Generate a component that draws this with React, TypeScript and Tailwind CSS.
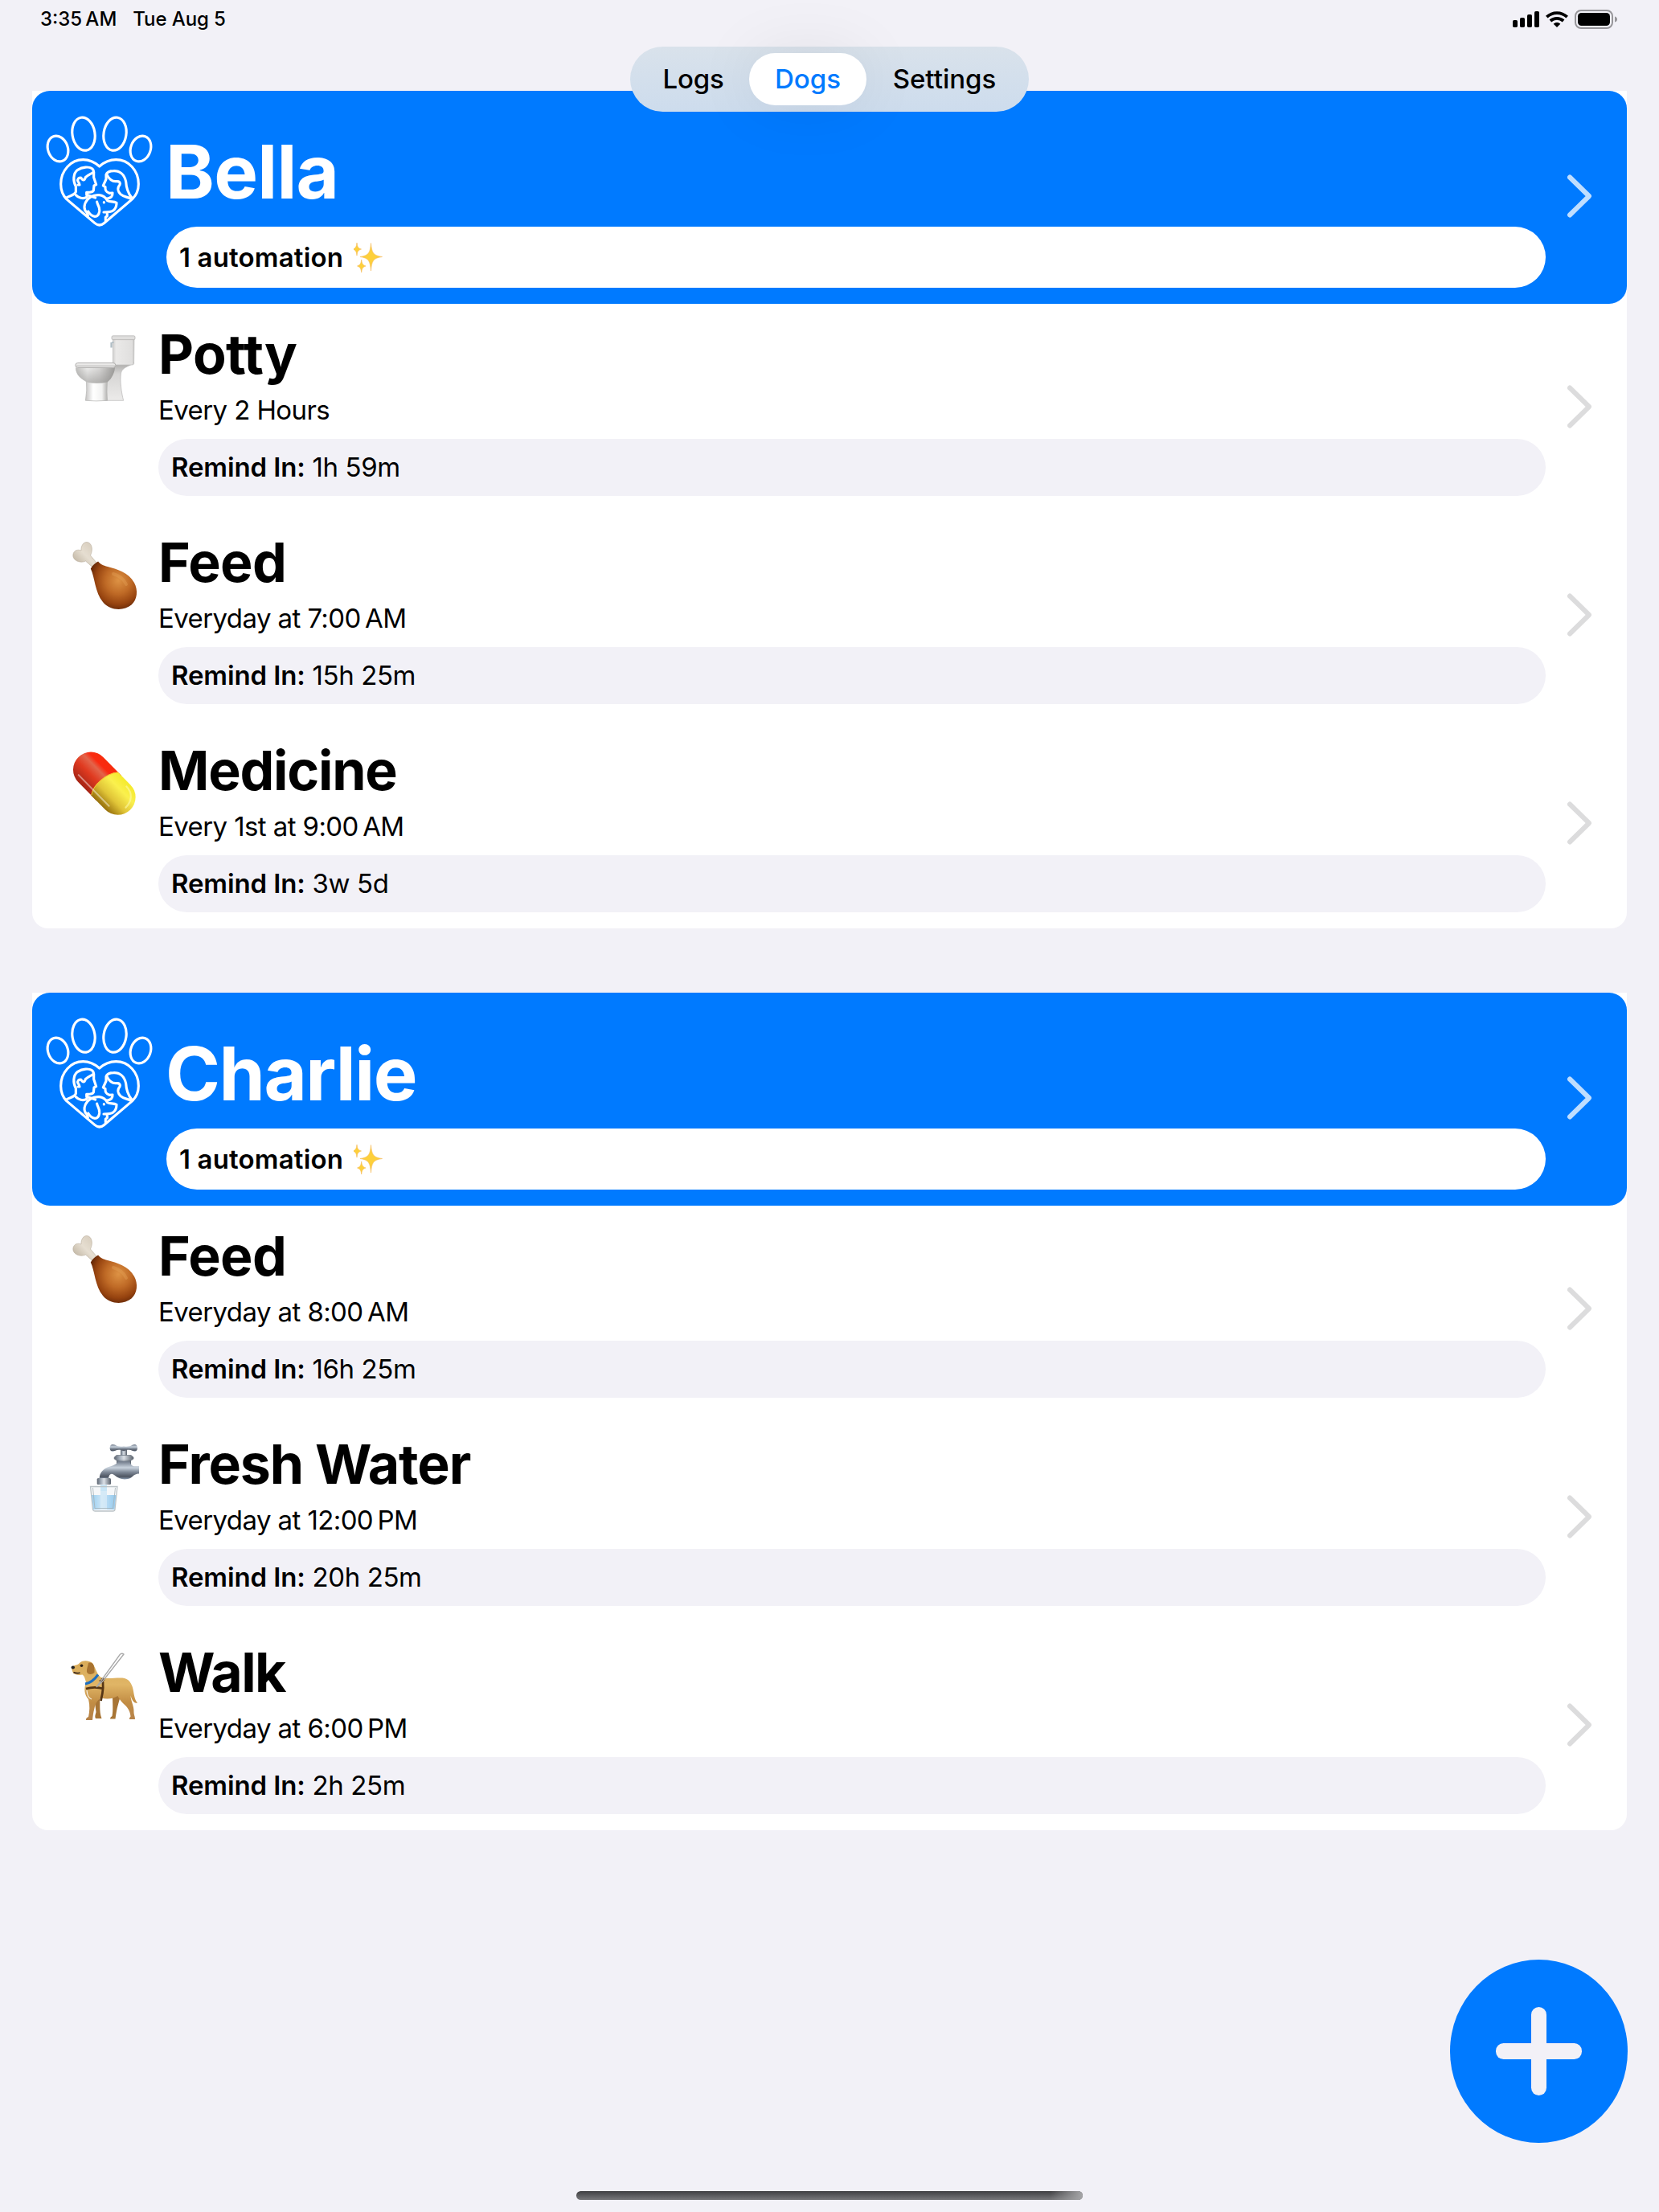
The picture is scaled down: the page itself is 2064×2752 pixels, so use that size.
import React from "react";

type Reminder = { icon: React.ReactNode; title: string; tracking: string; schedule: string; remind: string };
type Dog = { name: string; tracking: string; reminders: Reminder[] };

function Toilet() {
  return (
    <svg viewBox="0 0 86 88" className="h-[88px] w-[86px]">
      <defs>
        <linearGradient id="t1" x1="0" x2="1"><stop offset="0" stopColor="#cfcecd" /><stop offset=".15" stopColor="#eae9e8" /><stop offset=".9" stopColor="#e0dfde" /><stop offset="1" stopColor="#c0bfbe" /></linearGradient>
        <linearGradient id="t2" x1="0" x2="1"><stop offset="0" stopColor="#bfbebc" /><stop offset=".3" stopColor="#ededec" /><stop offset=".6" stopColor="#d9d8d7" /><stop offset="1" stopColor="#9c9b99" /></linearGradient>
        <linearGradient id="t3" x1="0" x2="1"><stop offset="0" stopColor="#c4c3c2" /><stop offset=".35" stopColor="#ffffff" /><stop offset=".75" stopColor="#f2f2f1" /><stop offset="1" stopColor="#b2b1af" /></linearGradient>
        <linearGradient id="t4" x1="0" x2="0" y1="0" y2="1"><stop offset="0" stopColor="#a9a8a6" /><stop offset=".3" stopColor="#d6d5d4" /><stop offset="1" stopColor="#ecebea" /></linearGradient>
        <linearGradient id="t5" x1="0" x2="0" y1="0" y2="1"><stop offset="0" stopColor="#8f8e8c" stopOpacity="0" /><stop offset="1" stopColor="#8f8e8c" stopOpacity=".55" /></linearGradient>
      </defs>
      <path d="M53 37H79C76 41 64 42 62.500 50C61 60 63 74 65.600 84.300H42V50Z" fill="url(#t4)" stroke="#b9b8b7" strokeWidth=".7" />
      <path d="M52.400 7H79L78.600 38.500Q78.500 40 76 40H52.400Z" fill="url(#t1)" stroke="#bfbebd" strokeWidth=".7" />
      <rect x="51" y="3.800" width="29" height="4.800" rx="1.500" fill="#dfdedd" stroke="#b0afae" strokeWidth=".7" />
      <path d="M50.500 12v6.500M51.500 12h2" stroke="#aebbc3" strokeWidth="2.200" />
      <path d="M19.500 60H45.500Q44.500 74 45.600 84.300Q32 85.500 18.400 84.300Q20.500 72 19.500 60Z" fill="url(#t3)" stroke="#b5b4b3" strokeWidth=".7" />
      <path d="M6 43.500C6 53 14 58 20 61.500Q32 64 45.500 61.500C52 56 54.500 49 55 43Z" fill="url(#t2)" />
      <path d="M6 43.500C6 53 14 58 20 61.500Q32 64 45.500 61.500C52 56 54.500 49 55 43Z" fill="url(#t5)" />
      <rect x="5.800" y="37.500" width="50" height="6" rx="3" fill="#ebeae9" stroke="#a9a8a7" strokeWidth=".9" />
      <path d="M7 41.200H55" stroke="#b0afad" strokeWidth=".9" />
    </svg>
  );
}

function Drumstick() {
  return (
    <svg viewBox="0 0 86 88" className="h-[88px] w-[86px]">
      <defs>
        <radialGradient id="d1" cx=".6" cy=".4" r=".62"><stop offset="0" stopColor="#dd9244" /><stop offset=".45" stopColor="#bf6a26" /><stop offset=".8" stopColor="#96430f" /><stop offset="1" stopColor="#6b2b08" /></radialGradient>
        <linearGradient id="d2" x1="0" x2="1" y1="1" y2="0"><stop offset="0" stopColor="#b4a894" /><stop offset=".5" stopColor="#e6ded1" /><stop offset="1" stopColor="#d2c7b6" /></linearGradient>
      </defs>
      <path d="M18.500 25C14 27.500 4.500 26 3 19.500C2 13 7.500 9.500 13 12C12.500 6 16 1 20.500 1.500C26.500 2.500 28 11 24.500 18L32.500 27.500L27 32.500Z" fill="url(#d2)" stroke="#b8ad9c" strokeWidth=".6" />
      <path d="M34.100 25.500C31 27 27 30 24.800 34.500C30 45 30 64 40 76C49 87 66 87.500 75.500 79.500C83 73 84 61 79 52C72 39 57 35 46 32C40 30.500 37 29 34.100 25.500Z" fill="url(#d1)" />
      <path d="M53 41C60 43 66 47 69 54" stroke="#e9a65b" strokeWidth="4" fill="none" strokeLinecap="round" opacity=".35" />
    </svg>
  );
}

function Capsule() {
  return (
    <svg viewBox="0 0 86 88" className="h-[88px] w-[86px]">
      <defs>
        <linearGradient id="c1" x1="0" x2="0" y1="0" y2="1"><stop offset="0" stopColor="#f62c0c" /><stop offset=".2" stopColor="#fa2a10" /><stop offset=".35" stopColor="#e2654b" /><stop offset=".6" stopColor="#e03a20" /><stop offset="1" stopColor="#a52415" /></linearGradient>
        <linearGradient id="c2" x1="0" x2="0" y1="0" y2="1"><stop offset="0" stopColor="#f5ea2c" /><stop offset=".3" stopColor="#faf04e" /><stop offset=".65" stopColor="#e0c437" /><stop offset="1" stopColor="#97700c" /></linearGradient>
      </defs>
      <g transform="translate(41.800 42.700) rotate(45.500)">
        <path d="M8 -22H-24A22 22 0 0 0 -24 22H8Z" fill="url(#c1)" />
        <path d="M2 -22H24A22 22 0 0 1 24 22H-1C-9 11 -7 -12 2 -22Z" fill="url(#c2)" />
        <path d="M2 -21.500C-7 -11 -9 11 -1 21.500" stroke="#f7c832" strokeWidth="1" fill="none" />
        <path d="M-30 15.500H24" stroke="#fff" strokeOpacity=".45" strokeWidth="2" strokeLinecap="round" />
        <path d="M22 -17C34 -17 40 -8 40 2" stroke="#fdf9a8" strokeOpacity=".6" strokeWidth="2.200" fill="none" strokeLinecap="round" />
      </g>
    </svg>
  );
}

function Faucet() {
  return (
    <svg viewBox="0 0 86 88" className="h-[88px] w-[86px]">
      <defs>
        <linearGradient id="f1" x1="0" x2="0" y1="0" y2="1"><stop offset="0" stopColor="#6e7887" /><stop offset=".35" stopColor="#c9d3de" /><stop offset=".6" stopColor="#7f8997" /><stop offset=".85" stopColor="#4e5561" /><stop offset="1" stopColor="#8fa0b5" /></linearGradient>
        <linearGradient id="f2" x1="0" x2="1"><stop offset="0" stopColor="#5c6470" /><stop offset=".3" stopColor="#a9b3bf" /><stop offset=".5" stopColor="#dbe0e6" /><stop offset="1" stopColor="#59616c" /></linearGradient>
        <linearGradient id="f3" x1="0" x2="1"><stop offset="0" stopColor="#7cc4f3" /><stop offset=".4" stopColor="#c4e6fb" /><stop offset="1" stopColor="#72bdf0" /></linearGradient>
      </defs>
      <path d="M62 9H70V17H62Z" fill="url(#f2)" />
      <path d="M66 4.500C62 5 58 5 55 2.600C51 .800 48.600 3 48.600 6.500C48.600 10 51 11.800 55 10C59 8 62 8.500 66 10.500C70 8.500 73 8 77 10C80.500 11.800 83 10 83 6.500C83 3 80.500 .800 77 2.600C74 5 70 5 66 4.500Z" fill="url(#f1)" />
      <path d="M57 20H75V28H57Z" fill="url(#f2)" />
      <path d="M57 15.500H75L78 18V20L75 22H57L54.200 20V18Z" fill="url(#f2)" stroke="#69717c" strokeWidth=".7" />
      <path d="M85 29.300H79C75 28.500 74 25 73 23H59C58 26 54 28 49 29.500C40 32 36 37 35.500 45H47C47.500 39 50 37.500 54 40C60 45 67 47.500 75 43.500C78 41 80 38.500 85 38.500Z" fill="url(#f1)" />
      <rect x="32.700" y="44" width="17.300" height="8" rx="1.500" fill="url(#f2)" />
      <path d="M37 52.500H45V66H37Z" fill="#bfe5fb" />
      <path d="M26 65H56.500L54.500 83H28Z" fill="url(#f3)" />
      <path d="M37 60H45V83H37Z" fill="#d8f0fd" opacity=".7" />
      <path d="M24.500 54.500H58L55 83Q54.800 85 52.500 85H30Q28 85 27.500 83Z" fill="#dfe6ea" fillOpacity=".3" stroke="#bcc4c8" strokeWidth="1.300" />
      <path d="M27.500 56L30 81.500H52.500L55.500 56" fill="none" stroke="#a6b2b8" strokeWidth=".8" />
    </svg>
  );
}

function GuideDog() {
  return (
    <svg viewBox="0 0 86 88" className="mt-px h-[88px] w-[86px]">
      <defs>
        <linearGradient id="g1" x1="0" x2="0" y1="0" y2="1"><stop offset="0" stopColor="#d9ab58" /><stop offset=".4" stopColor="#e0b566" /><stop offset=".7" stopColor="#c28d44" /><stop offset="1" stopColor="#b58249" /></linearGradient>
      </defs>
      <path d="M29 56L36 55C37 64 35 74 38.500 83H31C29.500 80 31 78 31.500 75Z" fill="#a87535" />
      <path d="M52 55H62C60 62 58 68 57 74Q56 79 55.500 83.500H49Q49 81 51.500 80C53 73 52 64 52 55Z" fill="#a87535" />
      <path d="M1.300 19C5 16 9 17 11.500 13.500C15 10.500 22 10.500 27 14C31 20 32 27 37 31.500C44 35 58 31.500 67 33C74 35 77 42 78 49C79 56 80.500 61 83 63.500C79 65 76 60 74.500 54.500C75 62 79 68 78.500 75C78.300 78 80 80 80 84H73Q72.500 82 74.500 80.500C74 74 71 69 65 64C62 61 60 58 58.500 55C52 59 44 59 38 57.500C33 60 31 64 29.500 70C28 76 27.500 80 27 85H19Q18.500 82.500 22 81C23.500 74 24 67 22 59C17 54 16 46 19 38C18 34 17 30 14.500 28.500C10 29.500 5 28.500 3 26.500C2 24 1 22 1.300 19Z" fill="url(#g1)" />
      <path d="M22 14C28 12 30 18 29.500 26C26 29 21 28.500 20 25C19.500 21 21.500 18 22 14Z" fill="#a87330" />
      <ellipse cx="2.800" cy="19.500" rx="2.200" ry="1.900" fill="#222" />
      <circle cx="13.500" cy="17.300" r="1.800" fill="#2b2018" />
      <path d="M3.500 25.500Q8 27.500 11.500 26" stroke="#38261c" strokeWidth="1.600" fill="none" />
      <path d="M18 40C24 39 30 34 34 28.500" stroke="#1d6fc0" strokeWidth="3" fill="none" />
      <path d="M19 46C27 43.500 34 44 41 46M39 33C41.500 41 40 51 37.500 61M36 37L42 34" stroke="#553515" strokeWidth="2.800" fill="none" />
      <path d="M20 48C20.500 55 23 58 26 59" stroke="#f7efe0" strokeWidth="1.200" fill="none" />
      <path d="M32 44L61.500 3Q64 1.500 66 3L39.500 37Z" fill="none" stroke="#a9a9a9" strokeWidth="1.300" />
    </svg>
  );
}

function Sparkles() {
  return (
    <svg viewBox="0 0 40 40" className="ml-[13px] h-10 w-10">
      <g fill="#fdd03b" stroke="#f5b95a" strokeWidth=".6" strokeLinejoin="round">
        <path d="M21.500 2.500C22.500 14 24 18 35.500 19.500C24 21 22.500 25 21.500 37C20.500 25 19 21 8 19.500C19 18 20.500 14 21.500 2.500Z" />
        <path d="M4 2C4.600 7 5.500 8.800 9.500 10C5.500 11.200 4.600 13 4 18C3.400 13 2.500 11.200 -1 10C2.500 8.800 3.400 7 4 2Z" />
        <path d="M9.700 23C10.300 28 11.200 29.600 15 31C11.200 32.400 10.300 34 9.700 39C9.100 34 8.200 32.400 4.500 31C8.200 29.600 9.100 28 9.700 23Z" />
      </g>
    </svg>
  );
}

function PawLogo() {
  return (
    <svg viewBox="0 0 450 480" className="mt-[17px] h-[160px] w-[150px] shrink-0" fill="none" stroke="#fff" strokeWidth="9.500" strokeLinejoin="round" strokeLinecap="round">
      <ellipse cx="66" cy="165" rx="37" ry="49" transform="rotate(-20 66 165)" />
      <ellipse cx="162" cy="110" rx="42" ry="62" transform="rotate(-9 162 110)" />
      <ellipse cx="279" cy="110" rx="42" ry="62" transform="rotate(9 279 110)" />
      <ellipse cx="375" cy="165" rx="37" ry="49" transform="rotate(20 375 165)" />
      <path d="M221 231C202 214 182 206 160 206C115 206 77 246 77 297C77 320 85 339 98 353L204 443Q221 457 238 443L344 353C359 338 367 319 367 297C367 246 330 206 283 206C261 206 240 214 221 231Z" />
      <path d="M96 349C105 340 127 342 133 326V306C122 286 122 258 140 244C158 232 182 232 192 238C201 242 199 250 200 256L200 272L209 299L201 303L199 321C195 329 185 328 173 328L173 337L206 348" />
      <path d="M200 252C190 260 178 262 169 272C165 285 158 284 153 274C143 272 138 279 141 287C146 292 146 297 147 300H141" />
      <path d="M133 338C142 348 160 354 173 346L176 338" />
      <path d="M342 349C324 326 321 308 320 288C314 260 296 247 274 248C262 248 250 250 246 262V279L235 303L243 308C242 322 246 327 258 331L270 330C271 342 264 350 250 351" />
      <path d="M249 262C258 280 272 288 284 287C296 286 300 291 297 300C286 312 291 326 300 335C312 346 328 345 340 352" />
      <path d="M178 415L174 403C163 393 163 380 169 366C180 345 199 337 220 338C238 339 246 350 251 359C262 365 274 360 285 367C285 379 284 388 272 396C264 402 254 402 237 402M250 403V416L244 421V433" />
      <path d="M212 363C213 376 223 379 221 399C219 412 213 418 204 418C192 417 184 407 179 399" />
      <path d="M238 365V366" />
    </svg>
  );
}

function Chevron({ className }: { className: string }) {
  return (
    <svg viewBox="0 0 30 54" className={className} fill="none" stroke="currentColor" strokeWidth="6" strokeLinecap="round" strokeLinejoin="round">
      <path d="M3 3.500L27 27L3 50.500" />
    </svg>
  );
}

const dogs: Dog[] = [
  {
    name: "Bella",
    tracking: "tracking-[-0.008em]",
    reminders: [
      { icon: <Toilet />, title: "Potty", tracking: "tracking-[-0.008em]", schedule: "Every 2 Hours", remind: "1h 59m" },
      { icon: <Drumstick />, title: "Feed", tracking: "tracking-[-0.01em]", schedule: "Everyday at 7:00\u202fAM", remind: "15h 25m" },
      { icon: <Capsule />, title: "Medicine", tracking: "tracking-[-0.018em]", schedule: "Every 1st at 9:00\u202fAM", remind: "3w 5d" },
    ],
  },
  {
    name: "Charlie",
    tracking: "tracking-[-0.016em]",
    reminders: [
      { icon: <Drumstick />, title: "Feed", tracking: "tracking-[-0.01em]", schedule: "Everyday at 8:00\u202fAM", remind: "16h 25m" },
      { icon: <Faucet />, title: "Fresh Water", tracking: "tracking-[-0.016em]", schedule: "Everyday at 12:00\u202fPM", remind: "20h 25m" },
      { icon: <GuideDog />, title: "Walk", tracking: "tracking-[-0.022em]", schedule: "Everyday at 6:00\u202fPM", remind: "2h 25m" },
    ],
  },
];

function ReminderRow({ icon, title, tracking, schedule, remind }: Reminder) {
  return (
    <div className="flex h-[259px] pr-11 pl-12">
      <div className="mt-9 w-[109px] shrink-0">{icon}</div>
      <div className="mt-[22px] w-[1726px]">
        <div className={`text-[68px] leading-[80px] font-bold ${tracking}`}>{title}</div>
        <div className="mt-2 text-[33px] leading-[44px] tracking-[-0.018em]">{schedule}</div>
        <div className="mt-[14px] h-[71px] rounded-full bg-[#f2f1f7] pl-4 text-[33px] leading-[70px] tracking-[-0.012em]">
          <span className="font-semibold tracking-[-0.004em]">Remind In:</span> {remind}
        </div>
      </div>
      <Chevron className="mt-[101px] ml-auto h-[54px] w-[30px] text-[#dcdcdd]" />
    </div>
  );
}

function DogCard({ name, tracking, reminders }: Dog) {
  return (
    <section className="overflow-hidden rounded-b-[20px] bg-white">
      <div className="flex h-[265px] rounded-[22px] bg-[#007aff] pr-11 pl-[10px]">
        <PawLogo />
        <div className="mt-[51px] ml-[7px] w-[1716px]">
          <div className={`-ml-px text-[92px] leading-[100px] font-bold text-white ${tracking}`}>{name}</div>
          <div className="mt-[18px] flex h-[76px] items-center rounded-full bg-white pl-4 text-[33px] font-semibold tracking-[0.005em]">
            <span className="mt-px">1 automation</span>
            <Sparkles />
          </div>
        </div>
        <Chevron className="mt-[104px] ml-auto h-[54px] w-[30px] text-[#bfdeff]" />
      </div>
      {reminders.map((r) => (
        <ReminderRow key={r.title} {...r} />
      ))}
    </section>
  );
}

function StatusBar() {
  return (
    <header className="flex h-[58px] items-start justify-between pr-[52px] pl-[50px] text-[24px] leading-[47px] font-medium">
      <div className="flex gap-5">
        <span>{"3:35\u202fAM"}</span>
        <span className="tracking-[-0.004em]">Tue Aug 5</span>
      </div>
      <div className="mt-3 flex h-6 items-center">
        <svg viewBox="0 0 33 20" className="h-5 w-[33px]">
          <rect x="0" y="11" width="6" height="9" rx="1.800" />
          <rect x="9" y="8" width="6" height="12" rx="1.800" />
          <rect x="18" y="4" width="6" height="16" rx="1.800" />
          <rect x="27" y="0" width="6" height="20" rx="1.800" />
        </svg>
        <svg viewBox="0 0 28 20" className="ml-2 h-5 w-7" fill="none" stroke="#000" strokeWidth="3.800">
          <path d="M1.300 7.200C8.500 .300 19.500 .300 26.700 7.200" />
          <path d="M5.900 12C10.500 7.700 17.500 7.700 22.100 12" />
          <path d="M14 20L9.700 15.700C12.200 13.500 15.800 13.500 18.300 15.700Z" fill="#000" stroke="none" />
        </svg>
        <svg viewBox="0 0 53 24" className="ml-2 h-6 w-[53px]">
          <rect x="1" y="1" width="46" height="22" rx="7" fill="none" stroke="#97969a" strokeWidth="2" />
          <rect x="4" y="4" width="40" height="16" rx="4.500" />
          <path d="M50 8.500Q53 9.500 53 12T50 15.500Z" fill="#97969a" />
        </svg>
      </div>
    </header>
  );
}

export default function App() {
  return (
    <div className="relative h-[2752px] w-[2064px] overflow-hidden bg-[#f2f1f7] font-['Inter',sans-serif] text-black">
      <StatusBar />
      <nav className="relative z-10 mx-auto flex h-[81px] w-[496px] items-center rounded-full bg-gradient-to-b from-[#d9e2eb] to-[#cddced] text-[33px] font-medium">
        <span className="w-[148px] pl-[9px] text-center tracking-[-0.005em]">Logs</span>
        <span className="flex h-[65px] w-[146px] items-center justify-center rounded-full bg-white text-[#007aff] shadow-[0_0_80px_rgba(0,0,0,0.08)]">Dogs</span>
        <span className="w-[202px] pr-[8px] text-center">Settings</span>
      </nav>
      <main className="-mt-[26px] flex flex-col gap-20 px-10">
        {dogs.map((d) => (
          <DogCard key={d.name} {...d} />
        ))}
      </main>
      <button className="absolute top-[2438px] left-[1804px] flex h-[228px] w-[221px] items-center justify-center rounded-[50%] bg-[#007aff]">
        <svg viewBox="0 0 107 110" className="h-[110px] w-[107px]" fill="#f2f1f7">
          <rect x="44" width="19" height="110" rx="9.500" />
          <rect y="45" width="107" height="20" rx="9.500" />
        </svg>
      </button>
      <div className="absolute top-[2726px] left-[717px] h-[11px] w-[630px] overflow-hidden rounded-full bg-gradient-to-b from-[#404042] to-[#79797b]">
        <div className="ml-auto h-full w-10 bg-gradient-to-r from-transparent to-[#a5a5a7]" />
      </div>
    </div>
  );
}
